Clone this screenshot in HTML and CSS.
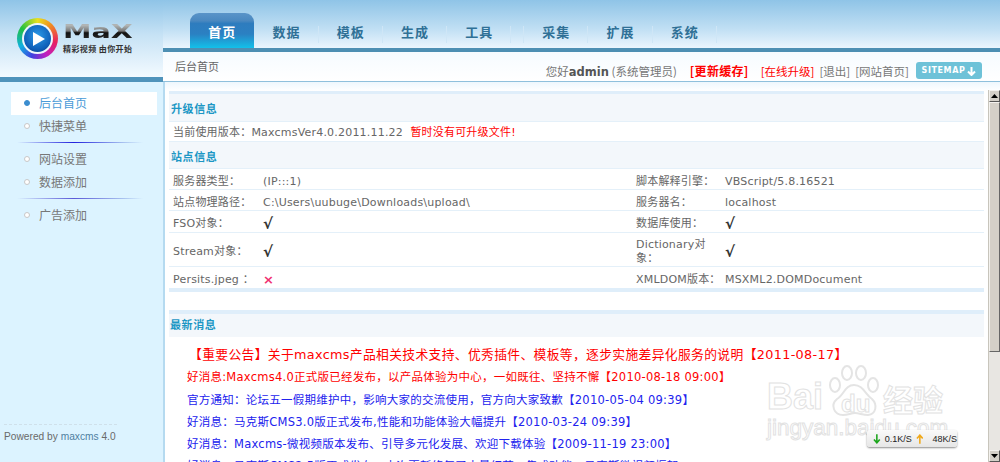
FILE: index.html
```html
<!DOCTYPE html>
<html lang="zh">
<head>
<meta charset="utf-8">
<title>Maxcms</title>
<link rel="stylesheet" href="styles.css">
</head>
<body>
<div class="page">
  <aside class="side">
    <div class="brand">
      <div class="ring"><div class="ring-white"><div class="disc">
        <svg width="14" height="16" viewBox="0 0 14 16"><path d="M1 1 L13 8 L1 15 Z" fill="#fff"/></svg>
      </div></div></div>
      <div class="brand-text">
        <div class="brand-name">MaX</div>
        <div class="brand-tag">精彩视频&nbsp;由你开始</div>
      </div>
    </div>
    <div class="side-bar"></div>
    <nav class="menu">
      <a class="item on"><i class="dot"></i>后台首页</a>
      <a class="item"><i class="dot"></i>快捷菜单</a>
      <div class="rule"></div>
      <a class="item"><i class="dot"></i>网站设置</a>
      <a class="item"><i class="dot"></i>数据添加</a>
      <div class="rule faint"></div>
      <a class="item"><i class="dot"></i>广告添加</a>
    </nav>
    <div class="powered">Powered by <span>maxcms</span> 4.0</div>
  </aside>
  <main class="main">
    <div class="tabs">
      <a class="tab active">首页</a>
      <a class="tab">数据</a>
      <a class="tab">模板</a>
      <a class="tab">生成</a>
      <a class="tab">工具</a>
      <a class="tab hidden-tab"></a>
      <a class="tab">采集</a>
      <a class="tab">扩展</a>
      <a class="tab">系统</a>
    </div>
    <div class="crumbs">
      <span class="crumb-title">后台首页</span>
      <div class="user">
        <span class="hello">您好<b>admin</b> (系统管理员)</span>
        <b class="cache">[更新缓存]</b>
        <span class="red upg">[在线升级]</span>
        <span>[退出]</span>
        <span>[网站首页]</span>
        <span class="sitemap">SITEMAP
          <svg width="9" height="10" viewBox="0 0 9 10"><path d="M4.5 1 V8.5 M1 5.5 L4.5 9 L8 5.5" fill="none" stroke="#fff" stroke-width="2"/></svg>
        </span>
      </div>
    </div>
    <div class="body">
      <div class="pane">
        <table class="info">
          <colgroup><col class="c1"><col class="c2"><col class="c3"><col></colgroup>
          <tr class="head"><th colspan="4">升级信息</th></tr>
          <tr class="h20"><td colspan="4">当前使用版本：MaxcmsVer4.0.2011.11.22 &nbsp;<span class="red">暂时没有可升级文件!</span></td></tr>
          <tr class="head sub"><th colspan="4">站点信息</th></tr>
          <tr class="h21"><td>服务器类型：</td><td>(IP:::1)</td><td>脚本解释引擎：</td><td>VBScript/5.8.16521</td></tr>
          <tr class="h21"><td>站点物理路径：</td><td>C:\Users\uubuge\Downloads\upload\</td><td>服务器名：</td><td>localhost</td></tr>
          <tr class="h22"><td>FSO对象：</td><td class="ok">√</td><td>数据库使用：</td><td class="ok">√</td></tr>
          <tr class="h34"><td>Stream对象：</td><td class="ok">√</td><td>Dictionary对象：</td><td class="ok">√</td></tr>
          <tr class="h21 last"><td>Persits.jpeg ：</td><td class="no">×</td><td class="nw">XMLDOM版本：</td><td>MSXML2.DOMDocument</td></tr>
        </table>
        <div class="news-head">最新消息</div>
        <ul class="news">
          <li class="red first">【重要公告】关于maxcms产品相关技术支持、优秀插件、模板等，逐步实施差异化服务的说明【2011-08-17】</li>
          <li class="red">好消息:Maxcms4.0正式版已经发布，以产品体验为中心，一如既往、坚持不懈【2010-08-18 09:00】</li>
          <li>官方通知：论坛五一假期维护中，影响大家的交流使用，官方向大家致歉【2010-05-04 09:39】</li>
          <li>好消息：马克斯CMS3.0版正式发布,性能和功能体验大幅提升【2010-03-24 09:39】</li>
          <li>好消息：Maxcms-微视频版本发布、引导多元化发展、欢迎下载体验【2009-11-19 23:00】</li>
          <li>好消息：马克斯CMS2.5版正式发布，本次更新修复了大量细节，集成功能，马克斯微视频框架</li>
        </ul>
      </div>
      <div class="scrollbar">
        <div class="sb-btn"><svg width="7" height="4" viewBox="0 0 7 4"><path d="M3.5 0 L7 4 H0 Z" fill="#000"/></svg></div>
        <div class="sb-thumb"></div>
        <div class="sb-track"></div>
        <div class="sb-btn"><svg width="7" height="4" viewBox="0 0 7 4"><path d="M0 0 H7 L3.5 4 Z" fill="#000"/></svg></div>
      </div>
    </div>
  </main>
</div>
<div class="mark">
  <svg class="paw" width="52" height="52" viewBox="0 0 52 52" fill="none" stroke="#e4e4e4" stroke-width="2">
    <ellipse cx="7" cy="20" rx="5" ry="7"/>
    <ellipse cx="19" cy="8" rx="5" ry="7"/>
    <ellipse cx="33" cy="8" rx="5" ry="7"/>
    <ellipse cx="45" cy="20" rx="5" ry="7"/>
    <path d="M26 20 C17 20 16 30 9 34 C2 40 6 50 15 50 C20 50 23 48 27 48 C31 48 35 50 40 50 C48 49 50 40 44 34 C37 29 35 20 26 20 Z"/>
  </svg>
  <span class="mark-bai">Bai</span><span class="mark-du">du</span><span class="mark-jy">经验</span>
  <span class="mark-url">jingyan.baidu.com</span>
</div>
<div class="speed">
  <svg width="8" height="10" viewBox="0 0 8 10"><path d="M4 0 V9 M1 5.5 L4 9 L7 5.5" fill="none" stroke="#1aa51a" stroke-width="1.6"/></svg>
  <span class="sp-down">0.1K/S</span>
  <svg width="8" height="10" viewBox="0 0 8 10"><path d="M4 10 V1 M1 4.5 L4 1 L7 4.5" fill="none" stroke="#f0a818" stroke-width="1.6"/></svg>
  <span class="sp-up">48K/S</span>
</div>
</body>
</html>
```
FILE: styles.css
```css
* { box-sizing: border-box; }
html, body { margin: 0; height: 462px; overflow: hidden; background: #fff; }
body {
  font-family: "DejaVu Sans", "Noto Sans CJK SC", sans-serif;
  font-size: 11px;
  color: #666;
}
.page { display: flex; height: 462px; }
.red { color: #f00; }

/* side column */
.side {
  width: 165px;
  flex: none;
  display: flex;
  flex-direction: column;
  background: #dcf3ff;
  border-right: 2px solid #b5daf0;
}
.brand {
  height: 77px;
  margin-right: -2px;
  padding: 18px 0 0 17px;
  display: flex;
  gap: 5px;
  background: linear-gradient(#8fc4e7, #c6e2f5 45%, #f3faff);
}
.ring {
  width: 41px; height: 41px; border-radius: 50%;
  padding: 5px;
  background: conic-gradient(#e8e020, #f09020 12%, #e82060 28%, #c020c0 42%, #4040e0 55%, #10b0e0 68%, #20c040 84%, #e8e020);
}
.ring-white { height: 100%; border-radius: 50%; background: #eef6fc; padding: 2px; }
.disc {
  height: 100%; border-radius: 50%;
  display: flex; align-items: center; justify-content: center;
  padding-left: 3px;
  background: radial-gradient(circle at 50% 40%, #2a9ae8, #0f5fb8 65%, #0a2f70);
}
.brand-text { width: 72px; padding-top: 2px; }
.brand-name {
  font: bold 20px/22px "DejaVu Sans", sans-serif;
  width: 50px;
  transform: scaleX(1.43);
  transform-origin: 0 50%;
  background: linear-gradient(#b0b4b4 25%, #777 50%, #111 58%, #333);
  -webkit-background-clip: text;
  background-clip: text;
  color: transparent;
}
.brand-tag {
  font: bold 8px/12px "Noto Sans CJK SC", sans-serif;
  letter-spacing: .4px;
  color: #333;
  white-space: nowrap;
  margin-top: 1px;
}
.side-bar { height: 5px; margin-right: -2px; background: #4f93bb; }
.menu { padding: 10px 6px 0 11px; font-family: "Noto Sans CJK SC", sans-serif; }
.item {
  height: 23px;
  display: flex;
  align-items: center;
  font-size: 12px;
  color: #777;
  padding: 0 0 2px 13px;
  gap: 9px;
}
.item.on { background: #fff; color: #4a9bd8; }
.dot {
  width: 6px; height: 6px; border-radius: 50%;
  background: #fff;
  border: 1px solid #c8c8c8;
}
.on .dot { background: #3b8dcf; border-color: #3b8dcf; }
.rule {
  height: 1px;
  margin: 4px 14px 5px 6px;
  background: linear-gradient(90deg, transparent, #2222dd 45%, #aac4f0 85%, transparent);
}
.rule.faint { background: linear-gradient(90deg, transparent, #5a5ad8 45%, #aac4f0 85%, transparent); }
.powered {
  margin: auto 46px 18px 4px;
  border-top: 1px dashed #cfe0ea;
  padding-top: 5px;
  font: 10.2px/14px "Liberation Sans", sans-serif;
  color: #6a6a6a;
  white-space: nowrap;
}
.powered span { color: #4f7f9f; }

/* main column */
.main { flex: 1; min-width: 0; display: flex; flex-direction: column; position: relative; }
.tabs {
  height: 48px;
  flex: none;
  margin-left: -2px;
  padding: 13px 0 0 27px;
  display: flex;
  background: linear-gradient(#8fc4e7, #c2e0f4 62%, #eaf5fd);
}
.tab {
  width: 64.3px;
  height: 35px;
  padding-top: 10px;
  text-align: center;
  font: bold 13px/17px "Noto Sans CJK SC", sans-serif;
  letter-spacing: 1px;
  color: #2f7096;
  background: linear-gradient(#cfe6f6, #cfe6f6) right 13px / 1px 17px no-repeat;
}
.hidden-tab { width: 12.5px; }
.tab.active {
  color: #fff;
  border-radius: 9px 9px 0 0;
  background: linear-gradient(#5a94c8, #4a88c0 22%, #2e7cbe 30%, #2b80c2 60%, #12c0ea);
}
.crumbs {
  height: 34px;
  flex: none;
  margin-left: -2px;
  border-top: 4px solid #4d8fb3;
  border-bottom: 1px solid #8fc0dc;
  background: linear-gradient(#f6fbff, #fff);
  display: flex;
  align-items: center;
  justify-content: space-between;
  padding: 0 18px 0 12px;
  font-family: "Noto Sans CJK SC", sans-serif;
}
.crumb-title { color: #666; font-size: 11px; margin-top: -1px; }
.user { display: flex; align-items: center; gap: 5px; font-size: 11.5px; margin-top: 8px; color: #777; white-space: nowrap; }
.user b { font-family: "DejaVu Sans", sans-serif; color: #555; }
.hello { margin-right: 8px; white-space: pre; }
.user .cache { font-family: "Noto Sans CJK SC", sans-serif; font-size: 12px; color: #f00; margin-right: 7px; letter-spacing: .3px; }
.sitemap {
  width: 66px; height: 17px;
  margin-left: 2px;
  border-radius: 3px;
  background: #6ec2d8;
  color: #fff;
  font: bold 8px/17px "DejaVu Sans", sans-serif;
  letter-spacing: .6px;
  display: flex; align-items: center; justify-content: center; gap: 2px;
}
.body { flex: 1; min-height: 0; display: flex; background: linear-gradient(#eef7fd, #fff 9px); }
.pane { width: 823px; padding: 9px 4px 0 4px; overflow: hidden; flex: none; }

.info {
  width: 815px;
  table-layout: fixed;
  border-collapse: separate;
  border-spacing: 0;
  border-top: 3px solid #dfeefa;
  border-bottom: 4px solid #dfeefa;
  background: #fff;
}
.c1 { width: 90px; } .c2 { width: 373px; } .c3 { width: 89px; }
.info th {
  height: 28px;
  padding: 0 2px;
  text-align: left;
  background: #f3f7fb;
  color: #1d97c5;
  font: bold 11px "Noto Sans CJK SC", sans-serif;
  letter-spacing: .6px;
  border-bottom: 1px solid #e4f0f9;
}
.info .sub th { height: 27px; padding-top: 2px; }
.info td {
  padding: 2px 4px 0;
  color: #666;
  line-height: 14px;
  border-bottom: 1px solid #e4f0f9;
  letter-spacing: .2px;
}
.info .last td { border-bottom: 0; }
.info .h20 td { height: 20px; }
.info .h21 td { height: 21px; padding-top: 5px; }
.info .h22 td { height: 22px; padding-top: 4px; }
.info .h34 td { height: 34px; padding-top: 4px; }
.info .nw { white-space: nowrap; }
.info .ok { color: #333; font-size: 15px; font-weight: bold; }
.info .no { color: #f03070; font-size: 13px; font-weight: bold; }
.info .red { color: #f00; }

.news-head {
  height: 27px;
  margin-top: 18px;
  border-top: 4px solid #dfeefa;
  background: #f3f7fb;
  color: #1d97c5;
  font: bold 11px/20px "Noto Sans CJK SC", sans-serif;
  letter-spacing: .6px;
  padding-left: 1px;
  width: 815px;
}
.news { list-style: none; margin: 7px 0 0; padding: 0 0 0 18px; }
.news li {
  height: 22.3px;
  line-height: 22px;
  font-size: 11.5px;
  color: #2222ee;
  white-space: nowrap;
  letter-spacing: .25px;
}
.news li.red { color: #f00; }
.news li.first { padding-left: 2px; font-size: 12.8px; letter-spacing: .33px; }

.scrollbar { width: 12px; margin-top: 8px; display: flex; flex-direction: column; background: #e8e6e2; border-left: 1px solid #c8c5bc; }
.sb-btn { height: 12px; flex: none; background: #d4d0c8; border: 1px solid #f4f2ee; border-right-color: #555; border-bottom-color: #555; display: flex; align-items: center; justify-content: center; }
.sb-thumb { height: 250px; flex: none; background: #d4d0c8; border: 1px solid #f4f2ee; border-right-color: #666; border-bottom-color: #666; }
.sb-track { flex: 1; }

/* overlays */
.mark { position: absolute; left: 767px; top: 356px; width: 180px; height: 90px; pointer-events: none; }
.paw { position: absolute; left: 61px; top: 9px; }
.mark-bai, .mark-du, .mark-jy, .mark-url {
  position: absolute;
  white-space: nowrap;
  color: rgba(255,255,255,.55);
  -webkit-text-stroke: 1px #e2e2e2;
  font-family: "Liberation Sans", sans-serif;
}
.mark-bai { left: 0; top: 21px; font-size: 36px; line-height: 40px; font-weight: bold; }
.mark-du { left: 74px; top: 33px; font-size: 24px; line-height: 30px; font-weight: bold; }
.mark-jy { left: 116px; top: 25px; font: bold 30px/34px "Noto Sans CJK SC", sans-serif; }
.mark-url { left: 0; top: 58px; font-size: 22.5px; line-height: 28px; }
.speed {
  position: absolute; left: 867px; top: 430px; width: 90px; height: 17px;
  border-radius: 3px;
  background: linear-gradient(#fafafa, #e6e6e6);
  box-shadow: 0 1px 2px rgba(0,0,0,.45);
  display: flex; align-items: center;
  padding-left: 6px;
  font: 9px "Liberation Sans", sans-serif;
  color: #222;
}
.sp-down { margin: 0 4px 0 4px; }
.sp-up { margin-left: 9px; }
```
